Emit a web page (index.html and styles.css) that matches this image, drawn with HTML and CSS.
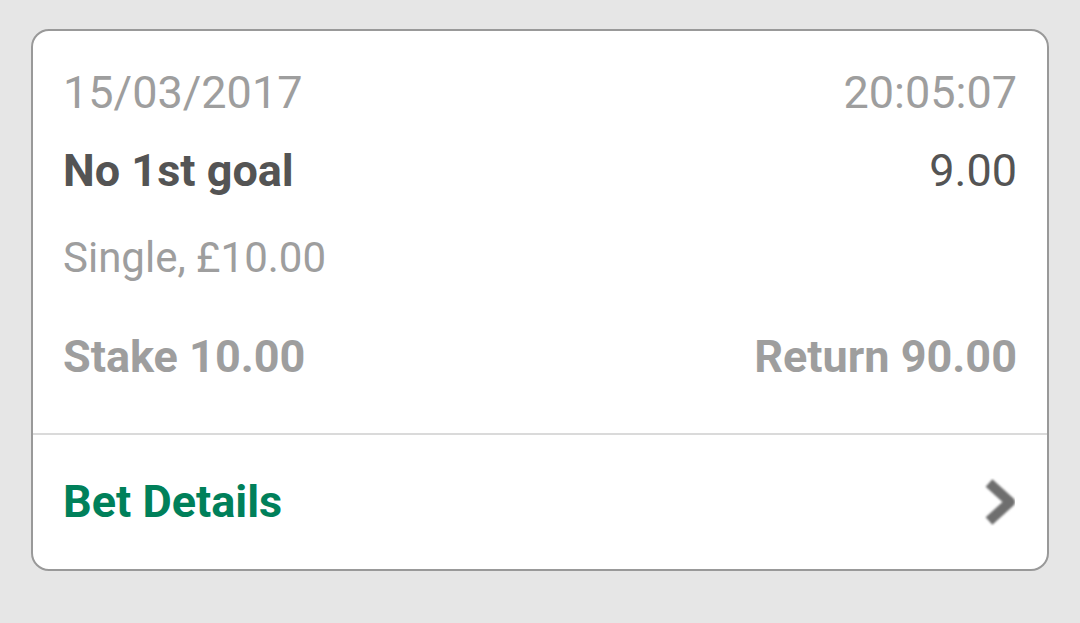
FILE: index.html
```html
<!DOCTYPE html>
<html lang="en">
<head>
  <meta charset="UTF-8">
  <title>Bet History</title>
  <link rel="stylesheet" href="styles.css">
</head>
<body>

<div class="bet-card">
  <div class="bet-body">
    <div class="row meta">
      <span>15/03/2017</span>
      <span>20:05:07</span>
    </div>
    <div class="row selection">
      <span class="sel-name">No 1st goal</span>
      <span>9.00</span>
    </div>
    <div class="bet-type">Single, £10.00</div>
    <div class="row totals">
      <span>Stake 10.00</span>
      <span>Return 90.00</span>
    </div>
  </div>

  <a class="bet-foot" href="#">
    <span>Bet Details</span>
    <svg class="chevron" width="34" height="48" viewBox="0 0 34 48">
      <defs>
        <filter id="soft" x="-20%" y="-20%" width="140%" height="140%">
          <feGaussianBlur stdDeviation="1.1"/>
        </filter>
      </defs>
      <path d="M6 5 L27 24 L6 43" fill="none" stroke="#6e6e6e" stroke-width="10" stroke-linejoin="round" filter="url(#soft)"/>
    </svg>
  </a>
</div>

</body>
</html>
```

FILE: styles.css
```css
body {
  margin: 0;
  padding: 29px 31px;
  background: #e6e6e6;
  font-family: Roboto, "Noto Sans", sans-serif;
}
.bet-card {
  background: #fff;
  border: 2px solid #999;
  border-radius: 18px;
  overflow: hidden;
}
.bet-body {
  padding: 35px 30px 49px;
}
.row {
  display: flex;
  justify-content: space-between;
  font-size: 45px;
  line-height: 54px;
}
.meta {
  color: #9e9e9e;
  margin-bottom: 24px;
}
.selection {
  color: #545454;
  margin-bottom: 35px;
}
.sel-name {
  font-weight: 700;
}
.bet-type {
  font-size: 42px;
  line-height: 50px;
  color: #9e9e9e;
  margin-bottom: 47px;
}
.totals {
  color: #9e9e9e;
  font-weight: 700;
}
.bet-foot {
  display: flex;
  justify-content: space-between;
  align-items: center;
  padding: 40px 30px 40px;
  border-top: 2px solid #dadada;
  font-size: 45px;
  line-height: 54px;
  font-weight: 700;
  color: #00805a;
  text-decoration: none;
}
.chevron {
  display: block;
}
```
